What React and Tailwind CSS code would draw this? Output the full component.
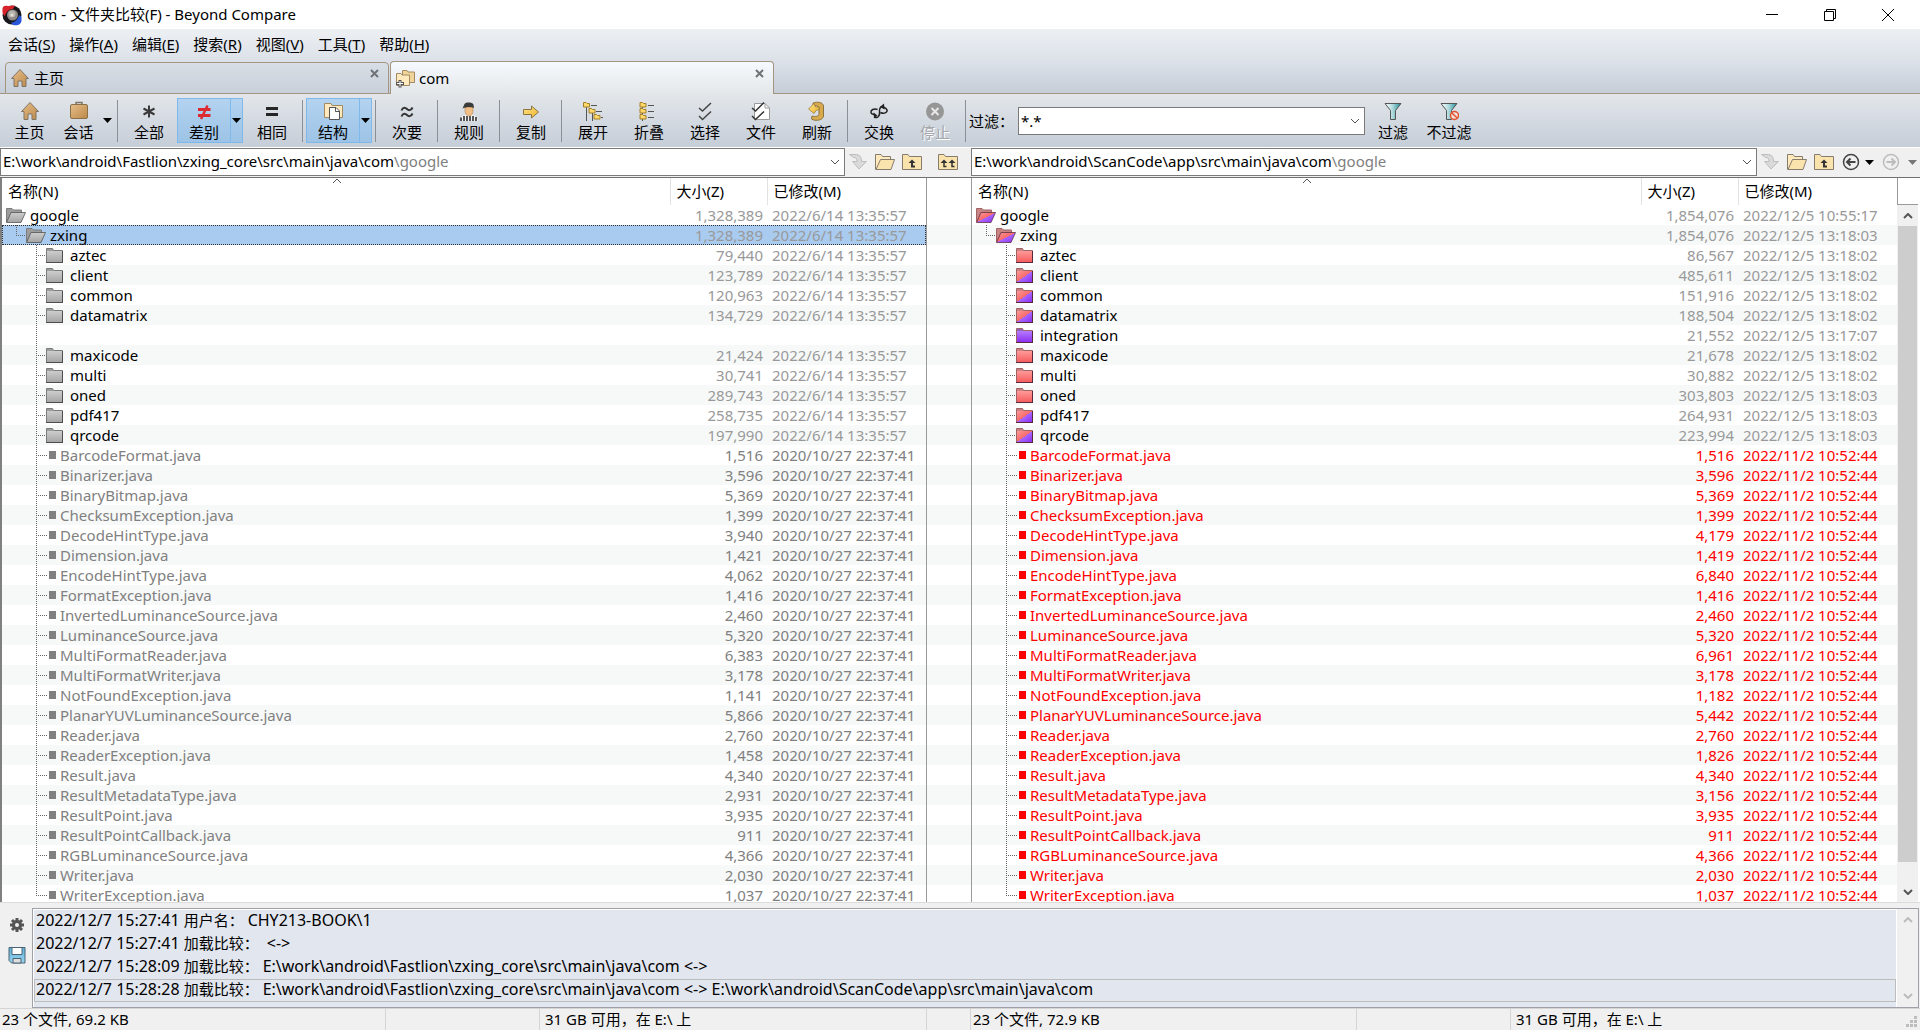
import { useState } from 'react'

const MENUS = [
    ['会话', 'S'],
    ['操作', 'A'],
    ['编辑', 'E'],
    ['搜索', 'R'],
    ['视图', 'V'],
    ['工具', 'T'],
    ['帮助', 'H'],
]

const L = '2022/6/14 13:35:57'
const LF = '2020/10/27 22:37:41'
const RF = '2022/11/2 10:52:44'

// name, left size, right size, right date, right folder colour
const FOLDERS = [
    ['aztec', '79,440', '86,567', '2022/12/5 13:18:02', 'red'],
    ['client', '123,789', '485,611', '2022/12/5 13:18:02', 'mixed'],
    ['common', '120,963', '151,916', '2022/12/5 13:18:02', 'mixed'],
    ['datamatrix', '134,729', '188,504', '2022/12/5 13:18:02', 'mixed'],
    ['integration', null, '21,552', '2022/12/5 13:17:07', 'purple'],
    ['maxicode', '21,424', '21,678', '2022/12/5 13:18:02', 'red'],
    ['multi', '30,741', '30,882', '2022/12/5 13:18:02', 'red'],
    ['oned', '289,743', '303,803', '2022/12/5 13:18:03', 'red'],
    ['pdf417', '258,735', '264,931', '2022/12/5 13:18:03', 'mixed'],
    ['qrcode', '197,990', '223,994', '2022/12/5 13:18:03', 'mixed'],
]

const FILES = [
    ['BarcodeFormat.java', '1,516', '1,516'],
    ['Binarizer.java', '3,596', '3,596'],
    ['BinaryBitmap.java', '5,369', '5,369'],
    ['ChecksumException.java', '1,399', '1,399'],
    ['DecodeHintType.java', '3,940', '4,179'],
    ['Dimension.java', '1,421', '1,419'],
    ['EncodeHintType.java', '4,062', '6,840'],
    ['FormatException.java', '1,416', '1,416'],
    ['InvertedLuminanceSource.java', '2,460', '2,460'],
    ['LuminanceSource.java', '5,320', '5,320'],
    ['MultiFormatReader.java', '6,383', '6,961'],
    ['MultiFormatWriter.java', '3,178', '3,178'],
    ['NotFoundException.java', '1,141', '1,182'],
    ['PlanarYUVLuminanceSource.java', '5,866', '5,442'],
    ['Reader.java', '2,760', '2,760'],
    ['ReaderException.java', '1,458', '1,826'],
    ['Result.java', '4,340', '4,340'],
    ['ResultMetadataType.java', '2,931', '3,156'],
    ['ResultPoint.java', '3,935', '3,935'],
    ['ResultPointCallback.java', '911', '911'],
    ['RGBLuminanceSource.java', '4,366', '4,366'],
    ['Writer.java', '2,030', '2,030'],
    ['WriterException.java', '1,037', '1,037'],
]

const LEFT_ROWS = [
    { type: 'root', name: 'google', size: '1,328,389', date: L, color: 'gray' },
    { type: 'branch', name: 'zxing', size: '1,328,389', date: L, color: 'gray' },
    ...FOLDERS.map(([name, size]) =>
        size ? { type: 'folder', name, size, date: L, color: 'gray' } : { type: 'blank', name: '', size: '', date: '' }
    ),
    ...FILES.map(([name, size]) => ({ type: 'file', name, size, date: LF, color: 'gray' })),
]

const RIGHT_ROWS = [
    { type: 'root', name: 'google', size: '1,854,076', date: '2022/12/5 10:55:17', color: 'mixed' },
    { type: 'branch', name: 'zxing', size: '1,854,076', date: '2022/12/5 13:18:03', color: 'mixed' },
    ...FOLDERS.map(([name, , size, date, color]) => ({ type: 'folder', name, size, date, color })),
    ...FILES.map(([name, , size]) => ({ type: 'file', name, size, date: RF, color: 'red' })),
]

const LOG = [
    ['2022/12/7 15:27:41', '用户名：', 'CHY213-BOOK\\1'],
    ['2022/12/7 15:27:41', '加载比较：', ' <->'],
    ['2022/12/7 15:28:09', '加载比较：', 'E:\\work\\android\\Fastlion\\zxing_core\\src\\main\\java\\com <->'],
    ['2022/12/7 15:28:28', '加载比较：', 'E:\\work\\android\\Fastlion\\zxing_core\\src\\main\\java\\com <-> E:\\work\\android\\ScanCode\\app\\src\\main\\java\\com'],
]

const PANES = 'grid grid-cols-[minmax(0,1fr)_45px_minmax(0,1fr)_23px]'

/* ---------- gradients shared by the icons ---------- */

function Gradients() {
    return (
        <svg width="0" height="0" className="absolute" aria-hidden="true">
            <defs>
                <linearGradient id="f-gray" x1="0" y1="0" x2="0" y2="1">
                    <stop offset="0" stopColor="#cdcdcd" />
                    <stop offset="1" stopColor="#a4a4a4" />
                </linearGradient>
                <linearGradient id="f-red" x1="0" y1="0" x2="0" y2="1">
                    <stop offset="0" stopColor="#ff9a9a" />
                    <stop offset="1" stopColor="#f55a5a" />
                </linearGradient>
                <linearGradient id="f-purple" x1="0" y1="0" x2="0" y2="1">
                    <stop offset="0" stopColor="#b57cff" />
                    <stop offset="1" stopColor="#8a2cf0" />
                </linearGradient>
                <linearGradient id="f-mixed" x1="0" y1="0" x2="1" y2="1">
                    <stop offset="0" stopColor="#ff9a9a" />
                    <stop offset="0.5" stopColor="#f96a6a" />
                    <stop offset="0.5" stopColor="#a866ff" />
                    <stop offset="1" stopColor="#8a2cf0" />
                </linearGradient>
                <linearGradient id="g-tan" x1="0" y1="0" x2="1" y2="1">
                    <stop offset="0" stopColor="#e6bf8a" />
                    <stop offset="1" stopColor="#bd8748" />
                </linearGradient>
                <linearGradient id="g-gold" x1="0" y1="0" x2="1" y2="1">
                    <stop offset="0" stopColor="#ffe58a" />
                    <stop offset="1" stopColor="#eeb32c" />
                </linearGradient>
                <linearGradient id="g-teal" x1="0" y1="0" x2="1" y2="0">
                    <stop offset="0" stopColor="#ffffff" />
                    <stop offset="0.45" stopColor="#b5dde0" />
                    <stop offset="1" stopColor="#1f8f98" />
                </linearGradient>
                <linearGradient id="g-disk" x1="0" y1="0" x2="0" y2="1">
                    <stop offset="0" stopColor="#5fb0dc" />
                    <stop offset="1" stopColor="#9ad4ee" />
                </linearGradient>
            </defs>
        </svg>
    )
}

function Icon({ children, size = 20 }) {
    return (
        <svg width={size} height={size} viewBox={`0 0 ${size} ${size}`} fill="none" className="shrink-0" aria-hidden="true">
            {children}
        </svg>
    )
}

const LogoIcon = () => (
    <Icon size={22}>
        <circle cx="11" cy="11" r="9.5" fill="#17171c" />
        <path d="M1.500 5.500C1 2 4 1 7 2L14 1.500L12 5C8 5 5 8 4 12C2 11 1 8 1.500 5.500Z" fill="#d8232a" />
        <path d="M20.500 15.500C21 20 17 22 12 21L10 18.500C14 18.500 17 15 18 11L20.500 13Z" fill="#2858d8" />
        <circle cx="11.500" cy="11" r="5.500" fill="#8b8784" />
        <circle cx="11" cy="10" r="3.500" fill="#b9b4ae" />
        <circle cx="11" cy="11" r="1.500" fill="#e4e0da" />
    </Icon>
)

const HomeIcon = () => (
    <Icon>
        <path d="M10 1.500L1.500 10.500H4V18.500H8V13H12V18.500H16V10.500H18.500L10 1.500Z" fill="url(#g-tan)" stroke="#7f7565" />
    </Icon>
)

const CaseIcon = () => (
    <Icon>
        <path d="M7 4.500V1.500H13V4.500" stroke="#7f7565" strokeWidth="1.500" />
        <rect x="1.500" y="3.500" width="17" height="14" rx="1.500" fill="url(#g-tan)" stroke="#8a7048" />
    </Icon>
)

const StarIcon = () => (
    <Icon>
        <path d="M10 4.500V16.500M4.500 7.500L15.500 13.500M15.500 7.500L4.500 13.500" stroke="#3a3a3a" strokeWidth="2" />
    </Icon>
)

const NotEqualIcon = () => (
    <Icon>
        <path d="M4 8.500H16.500M4 14.500H16.500" stroke="#dd2a30" strokeWidth="3" />
        <path d="M13.500 4.500L7 18" stroke="#dd2a30" strokeWidth="2.500" />
    </Icon>
)

const EqualIcon = () => (
    <Icon>
        <path d="M4 7.500H16M4 13.500H16" stroke="#262626" strokeWidth="3" />
    </Icon>
)

const StructureIcon = () => (
    <Icon>
        <path d="M1.500 16.500V2.500H8L9 4.500H19.500V16.500Z" fill="#ffe9bd" stroke="#a38a60" />
        <path d="M6.500 6.500H13L16.500 10V18.500H6.500Z" fill="#fff" stroke="#555" />
        <path d="M12.500 6.500V10.500H16.500" stroke="#555" />
    </Icon>
)

const ApproxIcon = () => (
    <Icon>
        <path
            d="M4.500 9.500C6 5.500 8.500 6.500 10 8C11.500 9.500 14 10 15.500 6.500M4.500 15.500C6 11.500 8.500 12.500 10 14C11.500 15.500 14 16 15.500 12.500"
            stroke="#333"
            strokeWidth="2"
        />
    </Icon>
)

const RefereeIcon = () => (
    <Icon>
        <path d="M1 20C1 16 4 14.500 7 14H13C16 14.500 19 16 19 20Z" fill="#f4f4f4" />
        <path d="M2 20V16.500M5 20V15M8 20V15M11 20V15M14 20V15M17 20V16" stroke="#222" strokeWidth="1.500" />
        <path d="M6 6H14V10C14 13 12 15 10 15C8 15 6 13 6 10Z" fill="#f0bf87" stroke="#a87844" strokeWidth="0.500" />
        <path d="M3.500 7.500L5.500 3C7 1 13 1 14.500 3.500L15 7C12 5.500 7 6 3.500 7.500Z" fill="#3b3b3b" />
    </Icon>
)

const CopyIcon = () => (
    <Icon>
        <path d="M2.500 8.500H10.500V5L17.500 11L10.500 17V13.500H2.500Z" fill="url(#g-gold)" stroke="#8a7440" />
    </Icon>
)

const MiniFolder = ({ x, y }) => (
    <path d={`M${x} ${y}h2.500l1 1h2.500v3.500h-6z`} fill="#ffd967" stroke="#a37d2a" />
)

const ExpandIcon = () => (
    <Icon>
        <path d="M3.500 5V20M9.500 11V20M8 4.500H14M13 10.500H19M18 16.500H20" stroke="#555" />
        <MiniFolder x={0.5} y={1.5} />
        <MiniFolder x={6} y={7.5} />
        <MiniFolder x={11} y={13.5} />
    </Icon>
)

const CollapseIcon = () => (
    <Icon>
        <path d="M3.500 5V20M9 4.500H15M9 10.500H15M9 16.500H15" stroke="#555" />
        <MiniFolder x={1} y={1.5} />
        <MiniFolder x={1} y={7.5} />
        <MiniFolder x={1} y={13.5} />
    </Icon>
)

const SelectIcon = () => (
    <Icon>
        <path d="M4 7L7.500 10L16 2M4 15L7.500 18.500L16 10.500" stroke="#444" strokeWidth="1.500" />
    </Icon>
)

const FilesIcon = () => (
    <Icon>
        <path d="M3.500 2.500H14L18.500 7V18.500H3.500Z" fill="#fff" stroke="#9a9a9a" />
        <path d="M14 2.500V7H18.500" stroke="#9a9a9a" />
        <path d="M1 7L4.500 10L13 1.500M1 15L4.500 18.500L13 10.500" stroke="#333" strokeWidth="1.500" />
    </Icon>
)

const RefreshIcon = () => (
    <Icon>
        <path d="M6 2C10 0.500 16 1 16.500 5V15C16 19.500 8 20.500 4.500 18L5 15C8 16 12 15.500 12 13V6.500C11 4.500 8 4 6 5Z" fill="#d9a94c" stroke="#8a7440" />
        <path d="M1.500 8L7 2.500L8.500 6H12V9H9.500L7 12.500L1.500 8Z" fill="url(#g-gold)" stroke="#94762c" strokeWidth="0.700" />
    </Icon>
)

const SwapIcon = () => (
    <Icon>
        <path
            d="M8.500 8.500C5 7 1.500 9 2 11.500C2.300 13.500 4.500 13.500 6 13.500M5.500 16C9 18 11 14 10.500 11C10 7 12 4.500 15 6M11.500 11.500C15 13.500 18.500 11.500 18 9C17.500 7 15 6.500 14 6"
            stroke="#222"
            strokeWidth="1.500"
        />
        <path d="M4.500 11.500L8.500 14.500L5 17.500ZM15 2.500L11 6L15.500 8.500Z" fill="#222" />
    </Icon>
)

const StopIcon = () => (
    <Icon>
        <circle cx="10" cy="10.500" r="9" fill="#969696" />
        <path d="M6.500 7L13.500 14M13.500 7L6.500 14" stroke="#e8e8e8" strokeWidth="2" />
    </Icon>
)

const FilterIcon = ({ off }) => (
    <Icon>
        <path d="M2 2.500H18L12.500 9.500V18.500H7.500V9.500Z" fill="url(#g-teal)" stroke="#555" />
        {off && (
            <>
                <circle cx="15.500" cy="14.500" r="4" fill="#f3ddd6" stroke="#e2512f" strokeWidth="1.500" />
                <path d="M12.800 12L18.200 17" stroke="#e2512f" strokeWidth="1.500" />
            </>
        )}
    </Icon>
)

const CompareTabIcon = () => (
    <Icon>
        <path d="M7.500 14.500V2.500H12L13 4H19.500V14.500Z" fill="#f0d49a" stroke="#a38a60" />
        <path d="M1.500 17.500V5.500H6L7 7H14.500V17.500Z" fill="#ffe9bd" stroke="#a38a60" />
        <path d="M5 12V19.500M1 15.500H9" stroke="#555" strokeWidth="3" />
        <path d="M5 13V18.500M2 15.500H8" stroke="#fff" />
    </Icon>
)

const TabClose = () => (
    <Icon size={10}>
        <path d="M1 1L8 8M8 1L1 8" stroke="#6f7377" strokeWidth="2" />
    </Icon>
)

/* ---------- path bar icons ---------- */

const ApplyIcon = () => (
    <Icon>
        <path d="M1.500 2.500H7C12 2.500 13.500 5 13.500 9.500H18.500L11 17L4.500 9.500H9C9 7 8.500 5.500 5.500 5.500Z" fill="#dadada" stroke="#bdbdbd" />
    </Icon>
)

const OpenIcon = () => (
    <Icon>
        <path d="M0.500 17.500V2.500H6L7.500 4.500H15.500V8" fill="#ffe9bd" stroke="#857c6c" />
        <path d="M1 17.500L5.500 7.500H19.500L16 17.500Z" fill="#fbe3ae" stroke="#857c6c" />
    </Icon>
)

const UpIcon = ({ both }) => (
    <Icon>
        <path d="M0.500 17.500V2.500H6L7.500 4.500H19.500V17.500Z" fill="#fbe3ae" stroke="#857c6c" />
        {both ? (
            <>
                <path d="M2.500 11L6 7.500L9.500 11ZM10.500 11L14 7.500L17.500 11Z" fill="#333" />
                <path d="M6 10V14.500H8.500M14 10V14.500H16.500" stroke="#333" strokeWidth="1.500" />
            </>
        ) : (
            <>
                <path d="M6.500 11L10 7.500L13.500 11Z" fill="#333" />
                <path d="M10 10V14.500H13" stroke="#333" strokeWidth="2" />
            </>
        )}
    </Icon>
)

const HistoryIcon = ({ forward }) => (
    <Icon>
        <circle cx="10" cy="10" r="7.500" stroke={forward ? '#bdbdbd' : '#444'} strokeWidth="1.500" />
        <path
            d={forward ? 'M5.500 10H13.500M10.500 6.500L14 10L10.500 13.500' : 'M14.500 10H6.500M9.500 6.500L6 10L9.500 13.500'}
            stroke={forward ? '#bdbdbd' : '#444'}
            strokeWidth="2"
        />
    </Icon>
)

const Chevron = ({ up, color = '#555', width = 1 }) => (
    <svg width="10" height="6" viewBox="0 0 10 6" fill="none" className="shrink-0" aria-hidden="true">
        <path d={up ? 'M1 5L5 1L9 5' : 'M1 1L5 5L9 1'} stroke={color} strokeWidth={width} />
    </svg>
)

const Caret = ({ color = '#000' }) => (
    <svg width="9" height="5" viewBox="0 0 9 5" className="shrink-0" aria-hidden="true">
        <path d="M0 0H9L4.500 5Z" fill={color} />
    </svg>
)

/* ---------- tree ---------- */

const TAB_FILL = { gray: '#9d9d9d', red: '#c98383', mixed: '#c98383', purple: '#8b68b8' }
const FOLDER_FILL = { gray: 'url(#f-gray)', red: 'url(#f-red)', mixed: 'url(#f-mixed)', purple: 'url(#f-purple)' }

function FolderIcon({ color, open }) {
    const edge = color === 'gray' ? '#4d4d4d' : '#5a2a3c'
    const rim = color === 'gray' ? '#7c7c7c' : '#a06464'
    if (open) {
        return (
            <svg width="20" height="16" viewBox="0 0 20 16" className="shrink-0" aria-hidden="true">
                <path d="M0.500 15V1.500H6L7.500 3H15.500V7" fill={TAB_FILL[color]} stroke={rim} />
                <path d="M0.500 15.500L5 5.500H19.500L15 15.500Z" fill={FOLDER_FILL[color]} stroke={edge} strokeOpacity="0.750" />
            </svg>
        )
    }
    return (
        <svg width="17" height="16" viewBox="0 0 17 16" className="shrink-0" aria-hidden="true">
            <path d="M0.500 4V1.500H6.500L7.500 3.500H16.500V15" fill={TAB_FILL[color]} stroke={rim} />
            <path d="M0 4H16.500V15.500H0Z" fill={FOLDER_FILL[color]} />
            <path d="M0.500 4V15" stroke={rim} />
            <path d="M0 15.500H17M16.500 4V15" stroke={edge} fill="none" />
        </svg>
    )
}

// Dotted connector drawn in front of every nested row
function Connector({ corner, arm, width = 20 }) {
    return (
        <svg width={width} height="20" viewBox={`0 0 ${width} 20`} className="shrink-0" aria-hidden="true">
            <path d={corner ? 'M10.500 0V10' : 'M10.500 0V20'} stroke="#666" strokeDasharray="1 1" />
            {arm && <path d={`M10 10.500H${width}`} stroke="#666" strokeDasharray="1 1" />}
        </svg>
    )
}

function NameCell({ row, last }) {
    if (row.type === 'root') {
        return (
            <div className="flex h-5 items-center gap-1 pl-1">
                <FolderIcon color={row.color} open />
                {row.name}
            </div>
        )
    }
    if (row.type === 'branch') {
        return (
            <div className="flex h-5 items-center pl-1">
                <Connector corner arm />
                <FolderIcon color={row.color} open />
                <span className="pl-1">{row.name}</span>
            </div>
        )
    }
    return (
        <div className="flex h-5 items-center pl-6">
            <Connector corner={last} arm={row.type !== 'blank'} width={row.type === 'file' ? 22 : 20} />
            {row.type === 'folder' && (
                <>
                    <FolderIcon color={row.color} />
                    <span className="pl-[7px]">{row.name}</span>
                </>
            )}
            {row.type === 'file' && (
                <>
                    <span className={`ml-px h-2 w-[7px] ${row.color === 'red' ? 'bg-[#ff0000]' : 'bg-[#808080]'}`} />
                    <span className="pl-1">{row.name}</span>
                </>
            )}
        </div>
    )
}

function FileTable({ label, rows, selected, onSelect }) {
    return (
        <table className="relative w-full table-fixed border-collapse" aria-label={label}>
            <colgroup>
                <col />
                <col className="w-[97px]" />
                <col className="w-[159px]" />
            </colgroup>
            <thead>
                <tr className="h-[27px] text-left align-middle">
                    <th className="p-0 pb-0.5 pl-[6px] font-normal">
                        名称(N)
                        <span className="absolute left-[330px] top-0 leading-none">
                            <Chevron up />
                        </span>
                    </th>
                    <th className="border-l border-[#e2e2e2] p-0 pb-0.5 pl-[6px] font-normal">大小(Z)</th>
                    <th className="border-l border-[#e2e2e2] p-0 pb-0.5 pl-[6px] font-normal">已修改(M)</th>
                </tr>
            </thead>
            <tbody>
                {rows.map((row, i) => {
                    const file = row.type === 'file'
                    const tone = file ? (row.color === 'red' ? 'text-[#ff0000]' : 'text-[#808080]') : 'text-[#999999]'
                    const active = selected === i
                    return (
                        <tr
                            key={i}
                            onClick={() => onSelect(i)}
                            className={`h-5 whitespace-nowrap leading-5 ${
                                active
                                    ? 'bg-[#a9cbef] outline-1 -outline-offset-1 outline-dotted outline-[#333]'
                                    : i % 2
                                      ? 'bg-[#f7f9f9]'
                                      : ''
                            }`}
                        >
                            <td className={`p-0 ${file ? tone : 'text-black'}`}>
                                <NameCell row={row} last={i === rows.length - 1} />
                            </td>
                            <td className={`p-0 pr-1 text-right ${tone}`}>{row.size}</td>
                            <td className={`p-0 pl-[5px] ${tone}`}>{row.date}</td>
                        </tr>
                    )
                })}
            </tbody>
        </table>
    )
}

/* ---------- toolbar ---------- */

function Tool({ icon, label, disabled, narrow }) {
    return (
        <button
            type="button"
            disabled={disabled}
            className={`flex h-[45px] flex-col items-center pt-[3px] ${narrow ? 'w-[49px]' : 'w-14'} ${
                disabled ? 'text-[#a3a6aa] [text-shadow:1px_1px_0_#fff]' : ''
            }`}
        >
            {icon}
            <span className="leading-[22px]">{label}</span>
        </button>
    )
}

function SplitTool({ icon, label }) {
    return (
        <div className="mr-px flex h-[45px] border border-[#7fb8ea] bg-linear-to-b from-[#b3d3f0] to-[#9dc3e6]">
            <button type="button" aria-pressed="true" className="flex w-[52px] flex-col items-center pt-0.5">
                {icon}
                <span className="leading-[22px]">{label}</span>
            </button>
            <button type="button" aria-label={`${label} 选项`} className="flex w-3 items-center justify-center border-l border-[#7fb8ea]">
                <Caret />
            </button>
        </div>
    )
}

const Sep = () => <div className="mx-[2px] h-[42px] w-[2px] border-l border-[#8b9097]" />

function Toolbar() {
    const [mask, setMask] = useState('*.*')
    return (
        <div className="flex h-[53px] shrink-0 items-center bg-linear-to-b from-[#e3e7ea] to-[#c5cdd8] pl-[5px]">
            <Tool icon={<HomeIcon />} label="主页" narrow />
            <Tool icon={<CaseIcon />} label="会话" narrow />
            <button type="button" aria-label="会话 选项" className="flex h-[45px] w-3 items-center">
                <Caret />
            </button>
            <Sep />
            <Tool icon={<StarIcon />} label="全部" />
            <SplitTool icon={<NotEqualIcon />} label="差别" />
            <Tool icon={<EqualIcon />} label="相同" />
            <Sep />
            <SplitTool icon={<StructureIcon />} label="结构" />
            <Sep />
            <Tool icon={<ApproxIcon />} label="次要" />
            <Sep />
            <Tool icon={<RefereeIcon />} label="规则" />
            <Sep />
            <Tool icon={<CopyIcon />} label="复制" />
            <Sep />
            <Tool icon={<ExpandIcon />} label="展开" />
            <Tool icon={<CollapseIcon />} label="折叠" />
            <Tool icon={<SelectIcon />} label="选择" />
            <Tool icon={<FilesIcon />} label="文件" />
            <Tool icon={<RefreshIcon />} label="刷新" />
            <Sep />
            <Tool icon={<SwapIcon />} label="交换" />
            <Tool icon={<StopIcon />} label="停止" disabled />
            <Sep />
            <label htmlFor="mask" className="w-[49px]">
                过滤：
            </label>
            <div className="flex h-7 w-[347px] items-center border border-[#7a7a7a] bg-white">
                <input
                    id="mask"
                    value={mask}
                    onChange={(e) => setMask(e.target.value)}
                    className="min-w-0 flex-1 px-0.5 outline-none"
                />
                <button type="button" aria-label="过滤列表" className="px-1">
                    <Chevron />
                </button>
            </div>
            <Tool icon={<FilterIcon />} label="过滤" />
            <Tool icon={<FilterIcon off />} label="不过滤" />
        </div>
    )
}

function PathBox({ label, base, rest }) {
    return (
        <button
            type="button"
            aria-label={label}
            aria-haspopup="listbox"
            className="flex h-7 min-w-0 flex-1 items-center justify-between border border-[#7a7a7a] bg-white pl-0.5 pr-1 text-left"
        >
            <span className="truncate pb-0.5">
                {base}
                <span className="text-[#808080]">{rest}</span>
            </span>
            <Chevron />
        </button>
    )
}

function IconButton({ label, children, disabled }) {
    return (
        <button type="button" aria-label={label} disabled={disabled} className="flex w-[27px] justify-start pl-[3px]">
            {children}
        </button>
    )
}

function StatusGroup({ files, free }) {
    return (
        <>
            <div className="w-[386px] border-r border-[#d5d5d5] pl-0.5">{files}</div>
            <div className="w-[154px] border-r border-[#d5d5d5]" />
            <div className="min-w-0 flex-1 pl-[5px]">{free}</div>
        </>
    )
}

export default function App() {
    const [leftRow, setLeftRow] = useState(1)
    const [rightRow, setRightRow] = useState(-1)

    return (
        <div className="flex h-screen flex-col overflow-hidden bg-[#f0f0f0] font-['Noto_Sans','Noto_Sans_CJK_SC',sans-serif] text-[15px] leading-5 text-black">
            <Gradients />

            <header className="flex h-[29px] shrink-0 items-center bg-white pl-px pr-[3px]">
                <LogoIcon />
                <h1 className="flex-1 pb-0.5 pl-1">com - 文件夹比较(F) - Beyond Compare</h1>
                <button type="button" aria-label="最小化" className="flex w-[58px] justify-center">
                    <Icon size={14}>
                        <path d="M1 6.500H13" stroke="#000" />
                    </Icon>
                </button>
                <button type="button" aria-label="还原" className="flex w-[58px] justify-center">
                    <Icon size={14}>
                        <path d="M1.500 3.500H10.500V12.500H1.500ZM3.500 3.500V1.500H12.500V10.500H10.500" stroke="#000" />
                    </Icon>
                </button>
                <button type="button" aria-label="关闭" className="flex w-[58px] justify-center">
                    <Icon size={14}>
                        <path d="M1 1L13 13M13 1L1 13" stroke="#000" />
                    </Icon>
                </button>
            </header>

            <div className="shrink-0 bg-linear-to-b from-[#edf0f3] via-[#dce1e9] to-[#c5cdd7]">
                <nav className="flex h-8 items-center gap-3.5 pb-0.5 pl-2">
                    {MENUS.map(([name, key]) => (
                        <button type="button" key={key}>
                            {name}(<u className="underline-offset-2">{key}</u>)
                        </button>
                    ))}
                </nav>
                <div className="flex h-[33px] items-end" role="tablist">
                    <div className="h-px w-[5px] bg-[#a3957f]" />
                    <div className="flex h-8 w-[384px] items-center rounded-t border border-[#a3957f] bg-linear-to-b from-[#d8dee5] to-[#c9d0da] pl-1">
                        <button type="button" role="tab" aria-selected="false" className="flex flex-1 items-center gap-1">
                            <HomeIcon />
                            主页
                        </button>
                        <button type="button" aria-label="关闭 主页" className="mb-2 mr-2">
                            <TabClose />
                        </button>
                    </div>
                    <div className="h-px w-px bg-[#a3957f]" />
                    <div className="flex h-[33px] w-[384px] items-center rounded-t border border-b-0 border-[#a3957f] bg-linear-to-b from-[#f6fafe] to-[#e3e7ea] pl-1">
                        <button type="button" role="tab" aria-selected="true" className="flex flex-1 items-center gap-1">
                            <CompareTabIcon />
                            com
                        </button>
                        <button type="button" aria-label="关闭 com" className="mb-2 mr-2">
                            <TabClose />
                        </button>
                    </div>
                    <div className="h-px flex-1 bg-[#a3957f]" />
                </div>
            </div>

            <Toolbar />

            <div className={`${PANES} h-[30px] shrink-0 items-start border-t border-white`}>
                <div className="col-span-2 flex items-center">
                    <PathBox label="左侧路径" base="E:\work\android\Fastlion\zxing_core\src\main\java\com" rest="\google" />
                    <div className="flex w-[126px]">
                        <IconButton label="应用" disabled>
                            <ApplyIcon />
                        </IconButton>
                        <IconButton label="浏览">
                            <OpenIcon />
                        </IconButton>
                        <IconButton label="上一级">
                            <UpIcon />
                        </IconButton>
                        <div className="w-[9px]" />
                        <IconButton label="两侧上一级">
                            <UpIcon both />
                        </IconButton>
                    </div>
                </div>
                <div className="col-span-2 flex items-center">
                    <PathBox label="右侧路径" base="E:\work\android\ScanCode\app\src\main\java\com" rest="\google" />
                    <div className="flex w-[163px] items-center">
                        <IconButton label="应用" disabled>
                            <ApplyIcon />
                        </IconButton>
                        <IconButton label="浏览">
                            <OpenIcon />
                        </IconButton>
                        <IconButton label="上一级">
                            <UpIcon />
                        </IconButton>
                        <IconButton label="后退">
                            <HistoryIcon />
                        </IconButton>
                        <Caret />
                        <div className="w-1" />
                        <IconButton label="前进" disabled>
                            <HistoryIcon forward />
                        </IconButton>
                        <div className="w-[3px]" />
                        <Caret color="#777" />
                    </div>
                </div>
            </div>

            <main className={`${PANES} min-h-0 flex-1 border-b border-t border-b-[#dcdcdc] border-t-[#707070] bg-white`}>
                <section className="overflow-hidden border-l-2 border-[#808080]">
                    <FileTable label="左侧文件夹" rows={LEFT_ROWS} selected={leftRow} onSelect={setLeftRow} />
                </section>
                <div className="overflow-hidden border-l border-[#9a9a9a] pt-[27px]">
                    {LEFT_ROWS.map((_, i) => (
                        <div key={i} className={`h-5 ${i % 2 ? 'bg-[#f7f9f9]' : ''}`} />
                    ))}
                </div>
                <section className="overflow-hidden border-l border-[#9a9a9a]">
                    <FileTable label="右侧文件夹" rows={RIGHT_ROWS} selected={rightRow} onSelect={setRightRow} />
                </section>
                <div className="flex min-h-0 flex-col pr-0.5">
                    <div className="h-[27px] shrink-0 border-b border-l border-[#9a9a9a]" />
                    <div className="flex min-h-0 flex-1 flex-col items-center bg-[#f0f0f0]">
                        <button type="button" aria-label="向上滚动" className="flex h-[21px] w-full shrink-0 items-center justify-center">
                            <Chevron up width={2} />
                        </button>
                        <div className="min-h-0 w-[19px] flex-[636] bg-[#cdcdcd]" />
                        <div className="flex-[19]" />
                        <button type="button" aria-label="向下滚动" className="flex h-[21px] w-full shrink-0 items-center justify-center">
                            <Chevron width={2} />
                        </button>
                    </div>
                </div>
            </main>

            <footer className="shrink-0">
                <div className="flex pr-px pt-[5px]">
                    <div className="flex w-8 flex-col items-center gap-3 pl-0.5 pt-2">
                        <button type="button" aria-label="设置">
                            <Icon size={18}>
                                <path
                                    d="M9 2V16M2 9H16M4 4L14 14M14 4L4 14"
                                    stroke="#555"
                                    strokeWidth="3"
                                />
                                <circle cx="9" cy="9" r="3.500" fill="#f0f0f0" stroke="#555" strokeWidth="3" />
                            </Icon>
                        </button>
                        <button type="button" aria-label="保存日志">
                            <Icon size={18}>
                                <path d="M1 1.500H17V17H3.500L1 14.500Z" fill="url(#g-disk)" stroke="#4a6472" />
                                <path d="M4 1.500H14V8.500H4Z" fill="#fff" stroke="#4a6472" />
                                <path d="M5 12.500H13V17H5Z" fill="#ddd" stroke="#4a6472" />
                            </Icon>
                        </button>
                    </div>
                    <div className="flex h-[100px] min-w-0 flex-1 border border-[#a0a0a8] bg-[#e2e6ee]">
                        <ul className="min-w-0 flex-1 whitespace-pre border-l border-t border-white">
                            {LOG.map(([time, label, text], i) => (
                                <li
                                    key={i}
                                    className={`flex h-[23px] items-center border px-px pb-1 ${
                                        i === LOG.length - 1 ? 'border-[#bcbcbc]' : 'border-transparent'
                                    }`}
                                >
                                    <span className="pr-1 text-base leading-5">{time}</span>
                                    <span>{label}</span>
                                    <span className="pl-1 text-base leading-5">{text}</span>
                                </li>
                            ))}
                        </ul>
                        <div className="flex w-[22px] flex-col items-center justify-between border-l border-white bg-[#f0f0f0] py-2">
                            <Chevron up width={2} color="#bcbcbc" />
                            <Chevron width={2} color="#bcbcbc" />
                        </div>
                    </div>
                </div>
                <div className={`${PANES} h-[22px] border-t border-[#d5d5d5]`}>
                    <div className="flex">
                        <StatusGroup files="23 个文件, 69.2 KB" free="31 GB 可用，在 E:\ 上" />
                    </div>
                    <div className="border-x border-[#d5d5d5]" />
                    <div className="flex">
                        <StatusGroup files="23 个文件, 72.9 KB" free="31 GB 可用，在 E:\ 上" />
                    </div>
                    <div className="flex items-end justify-end p-0.5">
                        <Icon size={12}>
                            <path
                                d="M8 0H11V3H8ZM8 4H11V7H8ZM4 4H7V7H4ZM8 8H11V11H8ZM4 8H7V11H4ZM0 8H3V11H0Z"
                                fill="#bdbdbd"
                            />
                        </Icon>
                    </div>
                </div>
            </footer>
        </div>
    )
}
